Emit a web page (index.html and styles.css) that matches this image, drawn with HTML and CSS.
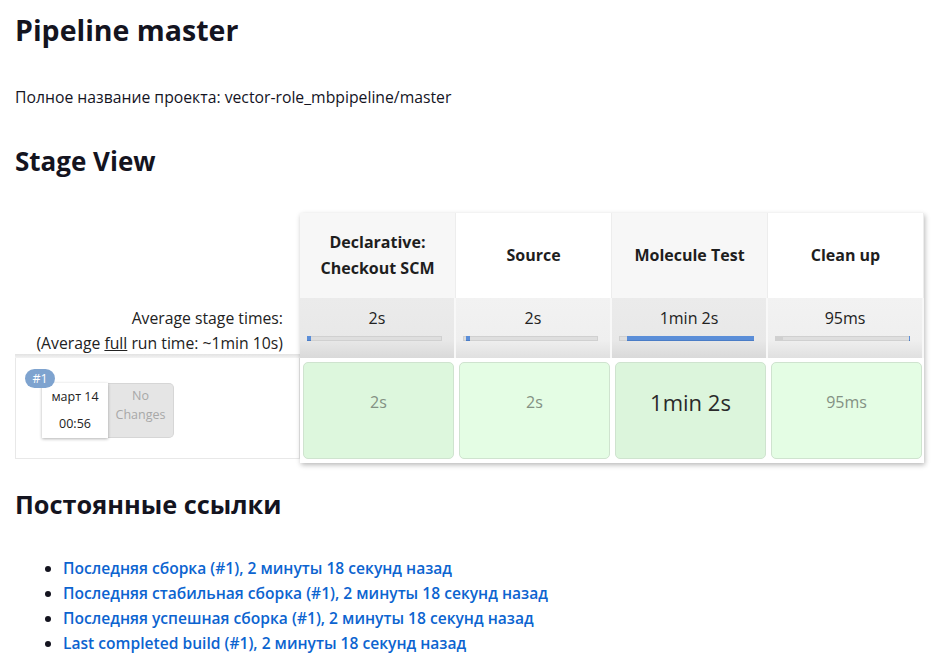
FILE: index.html
```html
<!DOCTYPE html>
<html lang="ru">
<head>
<meta charset="utf-8">
<title>Pipeline master</title>
<link rel="stylesheet" href="styles.css">
</head>
<body>
<div class="page">
  <h1 class="title">Pipeline master</h1>
  <p class="fullname">Полное название проекта: vector-role_mbpipeline/master</p>
  <h2 class="section stage-title">Stage View</h2>

  <div class="stageview">
    <div class="labels">
      <div class="lbl-head"></div>
      <div class="lbl-avg">
        <div>Average stage times:</div>
        <div>(Average <u>full</u> run time: ~1min 10s)</div>
      </div>
      <div class="lbl-build">
        <div class="build">
          <span class="badge">#1</span>
          <div class="date"><div>март 14</div><div>00:56</div></div>
          <div class="changes">No<br>Changes</div>
        </div>
      </div>
    </div>

    <div class="table">
      <div class="col odd">
        <div class="head">Declarative:<br>Checkout SCM</div>
        <div class="avg">
          <div class="avgtime">2s</div>
          <div class="bar"><div class="fill" style="margin-left:0;width:4px"></div></div>
        </div>
        <div class="cellrow"><div class="cell">2s</div></div>
      </div>
      <div class="col even">
        <div class="head">Source</div>
        <div class="avg">
          <div class="avgtime">2s</div>
          <div class="bar"><div class="fill" style="margin-left:3px;width:4px"></div></div>
        </div>
        <div class="cellrow"><div class="cell">2s</div></div>
      </div>
      <div class="col odd">
        <div class="head">Molecule Test</div>
        <div class="avg">
          <div class="avgtime">1min 2s</div>
          <div class="bar"><div class="fill" style="margin-left:8px;width:128px"></div></div>
        </div>
        <div class="cellrow"><div class="cell big">1min 2s</div></div>
      </div>
      <div class="col even">
        <div class="head">Clean up</div>
        <div class="avg">
          <div class="avgtime">95ms</div>
          <div class="bar"><div class="pre" style="width:10px"></div><div class="fill" style="margin-left:126px;width:1px"></div></div>
        </div>
        <div class="cellrow"><div class="cell">95ms</div></div>
      </div>
    </div>
  </div>

  <h2 class="section links-title">Постоянные ссылки</h2>
  <ul class="links">
    <li><a href="#">Последняя сборка (#1), 2 минуты 18 секунд назад</a></li>
    <li><a href="#">Последняя стабильная сборка (#1), 2 минуты 18 секунд назад</a></li>
    <li><a href="#">Последняя успешная сборка (#1), 2 минуты 18 секунд назад</a></li>
    <li><a href="#">Last completed build (#1), 2 минуты 18 секунд назад</a></li>
  </ul>
</div>
</body>
</html>
```

FILE: styles.css
```css
html, body {
  margin: 0;
  padding: 0;
  background: #fff;
}

body {
  font-family: "Open Sans", "Noto Sans", "Liberation Sans", sans-serif;
  color: #14141f;
  font-size: 15.75px;
}

.page {
  padding: 11px 15px 0 15px;
}

.title {
  margin: 0;
  font-size: 28.5px;
  line-height: 38px;
  font-weight: 700;
}

.fullname {
  margin: 36px 0 0 0;
  font-size: 15.75px;
  line-height: 24px;
}

.section {
  margin: 0;
  font-size: 26px;
  line-height: 32px;
  font-weight: 700;
}

.stage-title {
  margin-top: 36px;
}

/* Stage view */
.stageview {
  margin-top: 36px;
  display: flex;
  align-items: flex-start;
  color: #222;
}

.labels {
  width: 285px;
  flex: none;
  display: flex;
  flex-direction: column;
}

.lbl-head {
  height: 85px;
}

.lbl-avg {
  height: 60px;
  box-sizing: border-box;
  padding: 8px 17px 0 0;
  text-align: right;
  line-height: 25px;
  font-size: 15.75px;
  background: linear-gradient(to bottom, #fff 0, #fff calc(100% - 4px), #e2e2e2 calc(100% - 4px), #f3f3f3 100%);
}

.lbl-build {
  height: 101px;
  box-sizing: border-box;
  border: 1px solid #e8e8e8;
  border-top: none;
  padding: 25px 0 0 26px;
}

.build {
  position: relative;
  display: flex;
}

.badge {
  position: absolute;
  left: -17px;
  top: -14px;
  width: 30px;
  height: 19px;
  border-radius: 10px;
  background: #7ea3cf;
  color: #fff;
  font-size: 12.5px;
  line-height: 19px;
  text-align: center;
  z-index: 2;
}

.date {
  width: 66px;
  height: 55px;
  background: #fff;
  box-shadow: 0 1px 3px rgba(0, 0, 0, 0.3);
  font-size: 12.5px;
  line-height: 27px;
  text-align: center;
  color: #222;
  position: relative;
  z-index: 1;
}

.changes {
  width: 66px;
  height: 55px;
  box-sizing: border-box;
  background: #e5e5e5;
  border: 1px solid #d6d6d6;
  border-left: none;
  border-radius: 0 5px 5px 0;
  color: #a8a8a8;
  font-size: 12.5px;
  line-height: 19px;
  text-align: center;
  padding-top: 2px;
}

.table {
  display: flex;
  box-shadow: 1px 2px 5px rgba(0, 0, 0, 0.28);
  background: #fff;
}

.col {
  width: 156px;
  display: flex;
  flex-direction: column;
}

.head {
  height: 85px;
  display: flex;
  align-items: center;
  justify-content: center;
  text-align: center;
  font-weight: 700;
  font-size: 16px;
  line-height: 26px;
  color: #1e1e1e;
  box-sizing: border-box;
  border-right: 1px solid #ededed;
  padding-bottom: 1px;
}

.odd .head {
  background: #f7f7f7;
}

.even .head {
  background: #fff;
}

.avg {
  height: 60px;
  box-sizing: border-box;
  border-right: 2px solid #f8f8f8;
  padding-top: 8px;
}

.odd .avg {
  background: linear-gradient(to bottom, #ebebeb 0, #e8e8e8 70%, #d9d9d9 100%);
}

.even .avg {
  background: linear-gradient(to bottom, #f2f2f2 0, #efefef 70%, #e0e0e0 100%);
}

.avgtime {
  text-align: center;
  font-size: 16px;
  line-height: 24px;
  color: #222;
}

.bar {
  margin: 6px 12px 0 7px;
  height: 5px;
  background: #dedede;
  box-shadow: inset 0 0 0 1px #d0d0d0;
  display: flex;
}

.bar .pre {
  height: 5px;
  background: #d0d0d0;
}

.fill {
  height: 5px;
  background: #5b8ed8;
  box-shadow: inset 0 -1px 0 #4a7cc6;
}

.cellrow {
  height: 105px;
  box-sizing: border-box;
  padding: 4px 2px 4px 3px;
}

.cell {
  height: 97px;
  box-sizing: border-box;
  border: 1px solid #cfe3cf;
  border-radius: 5px;
  display: flex;
  align-items: center;
  justify-content: center;
  padding-bottom: 17px;
  font-size: 16px;
  color: #839183;
}

.odd .cell {
  background: #ddf7dd;
}

.even .cell {
  background: #e4fde4;
}

.cell.big {
  font-size: 22px;
  color: #2a2a2a;
  background: #dcf5dc;
  padding-bottom: 17px;
}

/* Links */
.links-title {
  margin-top: 25px;
  font-size: 25.3px;
}

.links {
  margin: 36px 0 0 0;
  padding: 0 0 0 48px;
  font-size: 15.6px;
  line-height: 25px;
}

.links a {
  color: #0c64d0;
  font-weight: 600;
  text-decoration: none;
}
```
